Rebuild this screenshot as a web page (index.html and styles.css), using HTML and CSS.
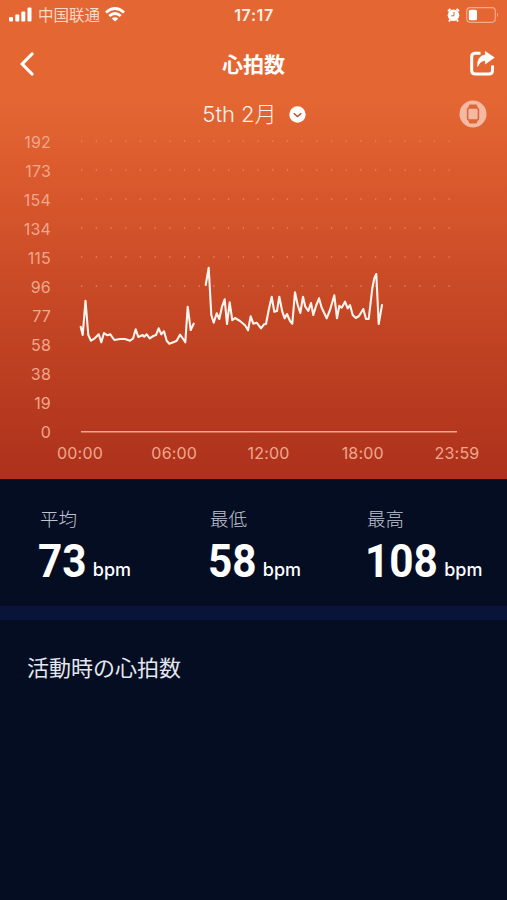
FILE: index.html
```html
<!DOCTYPE html>
<html lang="ja">
<head>
    <meta charset="UTF-8">
    <meta name="viewport" content="width=device-width, initial-scale=1.0">
    <title>心拍数</title>
    <link rel="stylesheet" href="styles.css">
</head>
<body>
    <div id="heart-rate">
        <div class="status-bar">
            <div class="carrier">
                <svg width="24" height="15" viewBox="0 0 24 15" fill="#fff">
                    <rect x="0" y="10" width="4" height="4.5" rx="1"/>
                    <rect x="6.3" y="7.5" width="4" height="7" rx="1"/>
                    <rect x="12.3" y="4.5" width="4" height="10" rx="1"/>
                    <rect x="18.5" y="0.5" width="4" height="14" rx="1"/>
                </svg>
                <span lang="zh-CN">中国联通</span>
                <svg width="20" height="15" viewBox="0 0 20 15" fill="none" stroke="#fff" stroke-width="2.9">
                    <path d="M1 5.5Q10-2.3 19 5.5"/>
                    <path d="M4.3 9Q10 4.1 15.7 9"/>
                    <path d="M10 14.6L6.8 11.5Q10 9 13.2 11.5Z" fill="#fff" stroke="none"/>
                </svg>
            </div>
            <span class="clock">17:17</span>
            <div class="battery">
                <svg width="13" height="14" viewBox="0 0 13 14">
                    <path d="M1 3L3.5 1M12 3L9.5 1M3 12L2 13.5M10 12L11 13.5" stroke="#fff" stroke-width="2"/>
                    <circle cx="6.5" cy="7.3" r="5.8" fill="#fff"/>
                    <path d="M7 4V7.8H4.2" fill="none" stroke="#e36733" stroke-width="1"/>
                </svg>
                <svg width="33" height="16" viewBox="0 0 33 16">
                    <rect x="0.7" y="0.7" width="28.6" height="14.6" rx="3.5" fill="none" stroke="#f2a98b" stroke-width="1.2"/>
                    <rect x="2.8" y="2.8" width="8.2" height="10.4" rx="1.5" fill="#fff"/>
                    <path d="M31 5.5Q33 8 31 10.5Z" fill="#f2a98b"/>
                </svg>
            </div>
        </div>

        <div class="nav">
            <svg width="14" height="24" viewBox="0 0 14 24" fill="none" stroke="#fff" stroke-width="3.2" stroke-linecap="round">
                <path d="M12 2L2.2 12L12 22"/>
            </svg>
            <h1>心拍数</h1>
            <svg width="25" height="26" viewBox="0 0 25 26">
                <path d="M10.5 2.2H5.2Q1.7 2.2 1.7 5.7V19.5Q1.7 23 5.2 23H19Q22.5 23 22.5 19.5V14.5" fill="none" stroke="#fff" stroke-width="3"/>
                <path d="M15.3 0.4L24.3 6.6L15.3 13V9.4Q10.5 9.4 7.6 15.5Q7 4.8 15.3 4Z" fill="#fff" stroke="#fff" stroke-width="0.6" stroke-linejoin="round"/>
            </svg>
        </div>

        <div class="date-row">
            <span></span>
            <div class="date">
                <span>5th 2月</span>
                <svg width="17" height="17" viewBox="0 0 17 17">
                    <circle cx="8.5" cy="8.5" r="8.2" fill="#fff"/>
                    <path d="M4.7 7.2L8.5 10.6L12.3 7.2" fill="none" stroke="#b5502e" stroke-width="1.5"/>
                </svg>
            </div>
            <svg width="28" height="28" viewBox="0 0 28 28">
                <circle cx="14" cy="14" r="13.5" fill="#f4b9a3"/>
                <path d="M10.5 4.5H17.5L19 8H9ZM10.5 23.5H17.5L19 20H9Z" fill="#e06636"/>
                <rect x="8.6" y="8" width="10.8" height="12" rx="2" fill="#f4b9a3" stroke="#e06636" stroke-width="1.6"/>
            </svg>
        </div>

        <div class="chart">
            <div class="y-axis">
                <span>192</span>
                <span>173</span>
                <span>154</span>
                <span>134</span>
                <span>115</span>
                <span>96</span>
                <span>77</span>
                <span>58</span>
                <span>38</span>
                <span>19</span>
                <span>0</span>
            </div>
            <svg class="plot" width="380" height="319" viewBox="79 128 380 319">
                <g class="dots">
                    <path d="M81 141H458"/>
                    <path d="M81 170H458"/>
                    <path d="M81 199H458"/>
                    <path d="M81 228H458"/>
                    <path d="M81 257H458"/>
                    <path d="M81 286H458"/>
                </g>
                <path class="base" d="M81 431.8H457"/>
                <polyline class="pulse" points="80.7,326.7 82.7,335 85.5,300.7 88.3,335 91,340.7 94.7,338.3 98.7,334.3 101.3,342.3 104,333 107.3,335.3 110.3,334.3 114.3,340 120,339 125,339 130,340.7 133,338.7 135.7,329.3 138.3,337 142.7,335 144.3,336.7 146.7,334.3 149.7,338.3 153.3,336 156,335 158.7,328.3 161.3,334.3 164,331.3 166.7,340.7 169.3,343.7 174,342 176.7,340.7 180,334.7 182.7,338.3 185.3,342.3 187.7,306.7 190.7,330 193.7,323.7"/>
                <polyline class="pulse" points="205.7,285 208.7,267.7 211.3,315 213.7,322.7 216.7,313.3 219.3,319 222,306.7 224.7,299.3 227,324 229.7,302.3 232.3,320.3 235,318 240,321 245,325.3 248,330.3 250.7,316.3 253.3,323.7 256.7,322.7 261,328.3 264,324.3 266,324 268.7,310 271.7,296.7 274.3,311.7 277,311 279.3,296.7 282.3,311.7 284.7,318.3 287,314 290,321 292.3,323.7 295,292.3 297.7,305 300.3,313 303,296.7 305.3,306.7 308.3,311 311,303 313.3,315 316,306 319,298.3 321.7,307.7 326.7,318.3 330,310 334.3,295.3 337,318.3 339.3,305.7 341.7,307.7 345,301.7 347.7,308.3 350,305 352.7,315 355.7,318 359,316 363.3,309 366,319 368.7,319 372.3,288.3 374.3,278.3 376.3,274 378.7,324 382,305"/>
            </svg>
        </div>
        <div class="x-axis">
            <span>00:00</span>
            <span>06:00</span>
            <span>12:00</span>
            <span>18:00</span>
            <span>23:59</span>
        </div>
    </div>

    <div id="summary">
        <div class="stat">
            <p>平均</p>
            <div class="value"><b>73</b><span>bpm</span></div>
        </div>
        <div class="stat">
            <p>最低</p>
            <div class="value"><b>58</b><span>bpm</span></div>
        </div>
        <div class="stat">
            <p>最高</p>
            <div class="value"><b class="long">108</b><span>bpm</span></div>
        </div>
    </div>

    <div id="activity">
        <h2>活動時の心拍数</h2>
    </div>
</body>
</html>
```
FILE: styles.css
```css
*{
    box-sizing: border-box;
}

body{
    margin: 0;
    min-height: 900px;
    background-color: #040d21;
    color: #ffffff;
    font-family: Inter, "Noto Sans CJK JP", sans-serif;
}

svg{
    display: block;
    flex-shrink: 0;
}

h1, h2, p{
    margin: 0;
}

#heart-rate{
    height: 479px;
    background: linear-gradient(#e46733 0, #e46733 95px, #da592d 180px, #c64825 300px, #ad311c 479px);
}

.status-bar{
    display: grid;
    grid-template-columns: 1fr auto 1fr;
    align-items: center;
    height: 29px;
    padding: 0 8px 0 9px;
}

.carrier{
    display: flex;
    align-items: center;
    gap: 5px;
    color: #fbd9c9;
    font-family: "Noto Sans CJK SC", sans-serif;
    font-size: 15.5px;
    line-height: 29px;
}

.clock{
    font-size: 16px;
    font-weight: 600;
    letter-spacing: 0.6px;
    color: #fff0e8;
}

.battery{
    display: flex;
    justify-content: flex-end;
    align-items: center;
    gap: 6px;
}

.nav{
    display: flex;
    justify-content: space-between;
    align-items: center;
    height: 70px;
    padding: 0 12px 0 20px;
}

.nav h1{
    padding: 2px 0 0 3px;
    font-size: 21px;
    line-height: 30px;
    font-weight: 700;
}

.date-row{
    display: grid;
    grid-template-columns: 1fr auto 1fr;
    align-items: center;
    height: 29px;
    padding: 0 20px 0 21px;
}

.date-row > svg{
    justify-self: end;
}

.date{
    display: flex;
    align-items: center;
    gap: 12px;
    padding-top: 2px;
    color: #fff0e8;
    font-size: 22px;
    font-weight: 300;
    line-height: 27px;
}

.chart{
    display: flex;
    height: 318px;
}

.y-axis{
    width: 51px;
    margin-right: 28px;
    text-align: right;
}

.y-axis span{
    display: block;
    height: 29px;
    line-height: 28px;
}

.y-axis, .x-axis{
    color: #f0a78c;
    font-size: 16px;
    letter-spacing: 0.2px;
}

.dots{
    stroke: #ed8259;
    stroke-width: 1.3;
    stroke-dasharray: 1.3 13.4;
}

.base{
    stroke: #f0a78c;
    stroke-width: 1.5;
}

.pulse{
    fill: none;
    stroke: #fff4ee;
    stroke-width: 2.1;
    stroke-linejoin: round;
    stroke-linecap: round;
}

.x-axis{
    display: flex;
    justify-content: space-between;
    width: 437px;
    margin-left: 50px;
    line-height: 15px;
}

.x-axis span{
    width: 60px;
    text-align: center;
}

#summary{
    display: grid;
    grid-template-columns: 170px 157px 1fr;
    height: 127px;
    padding: 26px 0 0 40px;
}

.stat p{
    color: #c0c4d2;
    font-size: 18.5px;
    font-weight: 300;
    line-height: 28px;
}

.value{
    display: flex;
    align-items: baseline;
    gap: 6px;
    margin-left: -2px;
    line-height: 56px;
}

.value b{
    margin-right: -4px;
    font-family: Roboto, sans-serif;
    font-size: 46px;
    transform: scaleX(0.92);
    transform-origin: left;
}

.value .long{
    margin-right: -6px;
}

.value span{
    position: relative;
    top: -1px;
    font-size: 18px;
    font-weight: 500;
}

#activity{
    border-top: 14px solid #08143a;
    padding: 31px 27px;
}

#activity h2{
    color: #e4e7f0;
    font-size: 22px;
    font-weight: 400;
    line-height: 34px;
}
```
